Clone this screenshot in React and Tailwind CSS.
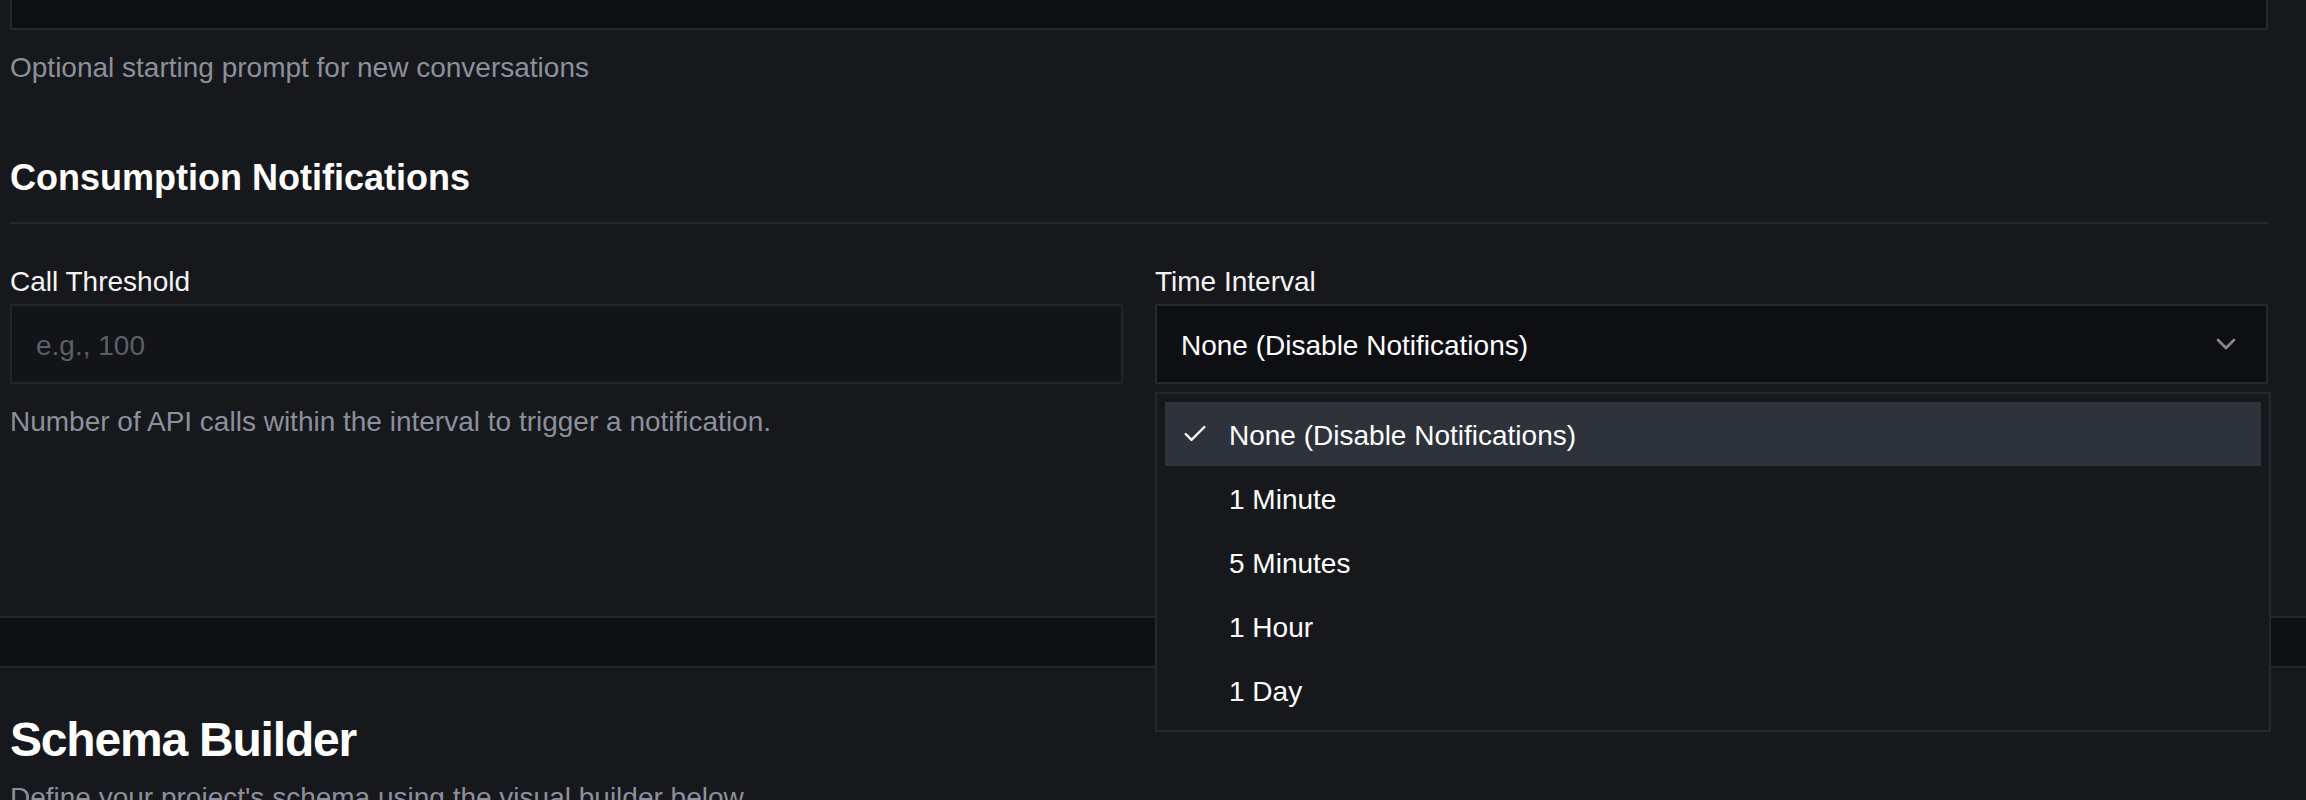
import React from "react";
import { Check, ChevronDown } from "lucide-react";

const options = [
  "None (Disable Notifications)",
  "1 Minute",
  "5 Minutes",
  "1 Hour",
  "1 Day",
];

export default function App() {
  return (
    <div className="[zoom:2] h-[400px] overflow-hidden bg-[#17181c] font-['Liberation_Sans',Arial,sans-serif] text-[#f4f4f5]">
      <section className="border-b border-[#25272d] pb-[87px]">
        <div className="ml-[5px] w-[1129px]">
          <div className="h-[15px] border-x border-b border-[#26282e] bg-[#0e0f13]" />
          <p className="mt-[9px] text-sm leading-5 text-[#8b909c]">
            Optional starting prompt for new conversations
          </p>
          <h3 className="mt-[31px] border-b border-[#26282e] pb-2 text-lg font-bold leading-7 text-white">
            Consumption Notifications
          </h3>
          <div className="mt-[19px] grid grid-cols-2 gap-4">
            <div className="flex flex-col">
              <label className="text-sm leading-5 text-[#f4f4f5]">Call Threshold</label>
              <div className="mt-px flex h-10 items-center border border-[#222429] bg-[#131418] px-3 pt-[2px] text-sm text-[#5c5f67]">
                e.g., 100
              </div>
              <p className="mt-[9px] text-sm leading-5 text-[#8b909c]">
                Number of API calls within the interval to trigger a notification.
              </p>
            </div>
            <div className="flex flex-col">
              <label className="text-sm leading-5 text-[#f4f4f5]">Time Interval</label>
              <div className="relative mt-px">
                <div className="flex h-10 items-center justify-between border border-[#26282e] bg-[#0e0f13] px-3 text-sm text-white">
                  <span className="pt-[2px]">None (Disable Notifications)</span>
                  <ChevronDown size={16} className="opacity-50" />
                </div>
                <div className="absolute left-0 top-[calc(100%+4px)] z-50 w-[558px] border border-[#25272d] bg-[#17181c] p-1">
                  {options.map((o, i) => (
                    <div
                      key={o}
                      className={
                        i === 0
                          ? "relative flex h-8 items-center bg-[#2e323b] pl-8 pr-2 text-sm text-white"
                          : "relative flex h-8 items-center pl-8 pr-2 text-sm text-white"
                      }
                    >
                      {i === 0 && (
                        <span className="absolute left-2 flex h-3.5 w-3.5 items-center justify-center">
                          <Check size={16} strokeWidth={2} />
                        </span>
                      )}
                      <span className="pt-[2px]">{o}</span>
                    </div>
                  ))}
                </div>
              </div>
            </div>
          </div>
        </div>
      </section>
      <div className="h-6 bg-[#0f1014]" />
      <section className="border-t border-[#25272d] pt-5">
        <div className="ml-[5px] w-[1129px]">
          <h2 className="text-2xl font-bold leading-8 tracking-tight text-white">Schema Builder</h2>
          <p className="mt-[3px] text-sm leading-5 text-[#8b909c]">
            Define your project's schema using the visual builder below.
          </p>
        </div>
      </section>
    </div>
  );
}
